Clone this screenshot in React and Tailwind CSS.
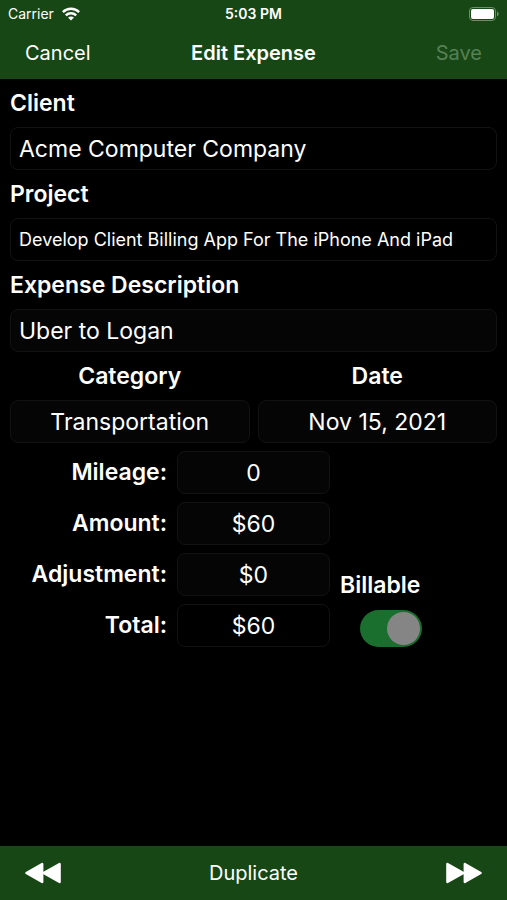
import React, { useState } from 'react';
import clsx from 'clsx';

const fieldClass = 'h-[43px] w-full min-w-0 rounded-lg border border-[#121212] text-white outline-none';

const WifiIcon = () => (
  <svg width="18" height="14" viewBox="0 0 18 14" fill="none" stroke="white" strokeWidth="2.5" aria-hidden="true">
    <path d="M0.9 5.1C5.4 0.7 12.6 0.7 17.1 5.1" />
    <path d="M3.8 8.3C6.8 5.5 11.2 5.5 14.2 8.3" />
    <path d="M9 13.6L6 10.6C7.8 9 10.2 9 12 10.6Z" fill="white" stroke="none" />
  </svg>
);

const BatteryIcon = () => (
  <svg width="30" height="14" viewBox="0 0 30 14" fill="none" aria-hidden="true">
    <rect x="0.5" y="0.5" width="26" height="13" rx="3.5" stroke="#6b9069" />
    <rect x="2" y="2" width="23" height="10" rx="2" fill="white" />
    <path d="M28 4.5C30.2 5.5 30.2 8.5 28 9.5Z" fill="#6b9069" />
  </svg>
);

const SkipIcon = ({ back }) => (
  <svg
    width="36"
    height="22"
    viewBox="0 0 36 22"
    fill="white"
    stroke="white"
    strokeWidth="2.4"
    strokeLinejoin="round"
    className={clsx(back && 'rotate-180')}
    aria-hidden="true"
  >
    <path d="M1.4 2L17.4 11L1.4 20Z" />
    <path d="M18.8 2L34.6 11L18.8 20Z" />
  </svg>
);

const TextField = ({ id, label, value, onChange, className }) => (
  <div>
    <label htmlFor={id} className="flex h-12 items-center text-[23px] font-semibold">
      {label}
    </label>
    <input id={id} value={value} onChange={onChange} className={clsx(fieldClass, 'px-2', className)} />
  </div>
);

const PickerField = ({ id, label, value, onChange }) => (
  <div>
    <label htmlFor={id} className="flex h-12 items-center justify-center text-[23px] font-semibold">
      {label}
    </label>
    <input id={id} value={value} onChange={onChange} className={clsx(fieldClass, 'bg-[#050505] text-center text-[23px]')} />
  </div>
);

const AmountRow = ({ id, label, value, onChange, className }) => (
  <>
    <label htmlFor={id} className="flex items-center justify-end text-[23px] font-semibold">
      {label}
    </label>
    <input id={id} value={value} onChange={onChange} className={clsx(fieldClass, 'text-center text-[23px]', className)} />
  </>
);

const App = () => {
  const [expense, setExpense] = useState({
    client: 'Acme Computer Company',
    project: 'Develop Client Billing App For The iPhone And iPad',
    description: 'Uber to Logan',
    category: 'Transportation',
    date: 'Nov 15, 2021',
    mileage: '0',
    amount: '$60',
    adjustment: '$0',
    total: '$60',
    billable: true,
  });

  const field = (name) => ({
    id: name,
    value: expense[name],
    onChange: (e) => setExpense({ ...expense, [name]: e.target.value }),
  });

  return (
    <div className="flex min-h-screen flex-col bg-black font-['Inter',sans-serif] text-white">
      <header className="bg-[#164714]">
        <div className="grid h-[27px] grid-cols-3 items-center px-2 text-sm">
          <div className="flex items-center gap-2">
            <span>Carrier</span>
            <WifiIcon />
          </div>
          <div className="text-center font-semibold">5:03 PM</div>
          <div className="flex justify-end">
            <BatteryIcon />
          </div>
        </div>
        <nav className="grid h-[52px] grid-cols-3 items-center px-[25px] text-xl">
          <button className="justify-self-start">Cancel</button>
          <h1 className="text-center font-semibold whitespace-nowrap">Edit Expense</h1>
          <button disabled className="justify-self-end text-[#578055]">Save</button>
        </nav>
      </header>

      <main className="flex-grow px-[10px]">
        <TextField label="Client" className="bg-black text-[23px]" {...field('client')} />
        <TextField label="Project" className="bg-black text-lg" {...field('project')} />
        <TextField label="Expense Description" className="bg-[#050505] text-[23px]" {...field('description')} />

        <div className="grid grid-cols-2 gap-2">
          <PickerField label="Category" {...field('category')} />
          <PickerField label="Date" {...field('date')} />
        </div>

        <div className="mt-2 grid grid-cols-[320fr_157fr] gap-[10px]">
          <div className="grid grid-cols-[157fr_153fr] gap-x-[10px] gap-y-2">
            <AmountRow label="Mileage:" className="bg-[#050505]" {...field('mileage')} />
            <AmountRow label="Amount:" className="bg-[#050505]" {...field('amount')} />
            <AmountRow label="Adjustment:" className="bg-[#050505]" {...field('adjustment')} />
            <AmountRow label="Total:" className="bg-black" {...field('total')} />
          </div>
          <div className="flex flex-col items-start justify-end gap-2">
            <label htmlFor="billable" className="text-[23px] font-semibold">
              Billable
            </label>
            <input
              id="billable"
              type="checkbox"
              role="switch"
              checked={expense.billable}
              onChange={(e) => setExpense({ ...expense, billable: e.target.checked })}
              className="ml-5 flex h-[37px] w-[62px] appearance-none items-center rounded-full bg-[#39393d] px-0.5 before:size-[33px] before:rounded-full before:bg-[#858585] checked:justify-end checked:bg-[#1a6e2e]"
            />
          </div>
        </div>
      </main>

      <footer className="grid h-[54px] grid-cols-3 items-center bg-[#164714] px-[25px] text-xl">
        <button className="justify-self-start" aria-label="Previous expense">
          <SkipIcon back />
        </button>
        <button>Duplicate</button>
        <button className="justify-self-end" aria-label="Next expense">
          <SkipIcon />
        </button>
      </footer>
    </div>
  );
};

export default App;
